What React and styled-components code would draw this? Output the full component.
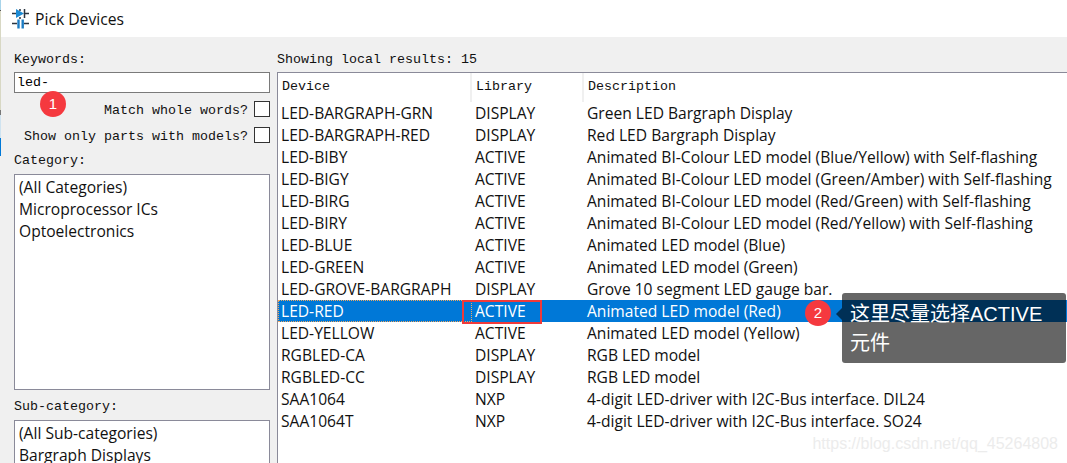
import React from "react";
import styled, { createGlobalStyle } from "styled-components";

const rows = [
  ["LED-BARGRAPH-GRN", "DISPLAY", "Green LED Bargraph Display"],
  ["LED-BARGRAPH-RED", "DISPLAY", "Red LED Bargraph Display"],
  ["LED-BIBY", "ACTIVE", "Animated BI-Colour LED model (Blue/Yellow) with Self-flashing"],
  ["LED-BIGY", "ACTIVE", "Animated BI-Colour LED model (Green/Amber) with Self-flashing"],
  ["LED-BIRG", "ACTIVE", "Animated BI-Colour LED model (Red/Green) with Self-flashing"],
  ["LED-BIRY", "ACTIVE", "Animated BI-Colour LED model (Red/Yellow) with Self-flashing"],
  ["LED-BLUE", "ACTIVE", "Animated LED model (Blue)"],
  ["LED-GREEN", "ACTIVE", "Animated LED model (Green)"],
  ["LED-GROVE-BARGRAPH", "DISPLAY", "Grove 10 segment LED gauge bar."],
  ["LED-RED", "ACTIVE", "Animated LED model (Red)"],
  ["LED-YELLOW", "ACTIVE", "Animated LED model (Yellow)"],
  ["RGBLED-CA", "DISPLAY", "RGB LED model"],
  ["RGBLED-CC", "DISPLAY", "RGB LED model"],
  ["SAA1064", "NXP", "4-digit LED-driver with I2C-Bus interface. DIL24"],
  ["SAA1064T", "NXP", "4-digit LED-driver with I2C-Bus interface. SO24"],
];

const GlobalStyle = createGlobalStyle`
  html, body { margin: 0; padding: 0; background: #f0f0f0; overflow: hidden; }
`;

const Page = styled.div`
  position: relative;
  width: 1067px;
  height: 463px;
  overflow: hidden;
  background: #f0f0f0;
  color: #000;
  font-family: "Open Sans", "Noto Sans", sans-serif;
`;

// sliver of the window behind the dialog, left in the screenshot
const EdgeSliver = styled.div`
  position: absolute;
  left: 0;
  top: 0;
  width: 1px;
  height: 156px;
  background: linear-gradient(
    to bottom,
    #a8d4ea 0,
    #a8d4ea 10px,
    #555 10px,
    #555 11px,
    #d8d8c4 11px,
    #d8d8c4 110px,
    #777 110px,
    #777 115px,
    #cfe3f0 115px,
    #cfe3f0 138px,
    #0078d7 138px
  );
`;

const TitleBar = styled.div`
  display: flex;
  align-items: center;
  gap: 6px;
  height: 37px;
  padding-left: 12px;
  background: #fff;
  font-size: 15.7px;
  color: #111;
`;

const Body = styled.div`
  display: flex;
  height: 426px;
`;

const Side = styled.div`
  display: flex;
  flex-direction: column;
  width: 256px;
  margin-left: 14px;
  padding-top: 15px;
`;

const Mono = styled.div`
  margin-top: ${({ $top }) => $top || 0}px;
  font-family: "Liberation Mono", monospace;
  font-size: 13.33px;
  line-height: 16px;
  color: #111;
`;

const Input = styled.div`
  height: 19px;
  margin-top: 4px;
  padding-left: 2px;
  border: 1px solid #7a7a7a;
  background: #fff;
  font-family: "Liberation Mono", monospace;
  font-size: 13.33px;
  line-height: 19px;
`;

const CheckRow = styled.div`
  display: flex;
  justify-content: flex-end;
  align-items: flex-start;
  gap: 6px;
  height: 16px;
  margin-top: ${({ $top }) => $top}px;
`;

const CheckLabel = styled(Mono)`
  padding-top: 2px;
`;

const Box = styled.div`
  width: 14px;
  height: 14px;
  border: 1px solid #333;
  background: #fff;
`;

const ListBox = styled.div`
  flex: none;
  box-sizing: border-box;
  height: ${({ $height }) => $height}px;
  margin-top: ${({ $top }) => $top}px;
  padding: 1px 4px;
  border: 1px solid #8a8a99;
  background: #fff;
  font-size: 15.6px;
  line-height: 22px;
  color: #111;
`;

const Results = styled.div`
  display: flex;
  flex-direction: column;
  flex: 1;
  margin-left: 7px;
  padding-top: 15px;
`;

const Table = styled.div`
  flex: none;
  height: 400px;
  margin-top: 4px;
  border: 1px solid #8a8a99;
  border-right: none;
  background: #fff;
`;

const Header = styled.div`
  display: grid;
  grid-template-columns: 194px 112px 1fr;
  height: 29px;
`;

const HeadCell = styled.div`
  padding: 5px 0 0 4px;
  border-right: 2px solid #f0f0f0;
  font-family: "Liberation Mono", monospace;
  font-size: 13.33px;
  line-height: 18px;
  color: #111;
  &:last-child { border-right: none; }
`;

const Row = styled.div`
  display: grid;
  grid-template-columns: 194px 112px 1fr;
  height: 22px;
  background: ${({ $selected }) => ($selected ? "#0078d7" : "transparent")};
  color: ${({ $selected }) => ($selected ? "#fff" : "#111")};
  font-size: 15.6px;
  line-height: 22px;
  white-space: nowrap;
`;

const Cell = styled.div`
  padding-left: 3px;
`;

const FocusCell = styled(Cell)`
  box-sizing: border-box;
  padding-left: 2px;
  border: 1px dotted ${({ $focus }) => ($focus ? "#f0a860" : "transparent")};
  line-height: 20px;
`;

const Badge = styled.div`
  position: absolute;
  left: ${({ $x }) => $x}px;
  top: ${({ $y }) => $y}px;
  width: 26px;
  height: 26px;
  border-radius: 50%;
  background: #f5393f;
  color: #fff;
  font-family: "Liberation Sans", sans-serif;
  font-size: 15px;
  line-height: 26px;
  text-align: center;
`;

const RedBox = styled.div`
  position: absolute;
  left: 462px;
  top: 300px;
  width: 76px;
  height: 20px;
  border: 2px solid #f03a3a;
`;

const Tip = styled.div`
  position: absolute;
  left: 842px;
  top: 293px;
  box-sizing: border-box;
  width: 224px;
  height: 70px;
  padding: 7px 8px;
  border-radius: 3px;
  background: rgba(0, 0, 0, 0.6);
  color: #fff;
  font-family: "Liberation Sans", "Noto Sans CJK SC", sans-serif;
  font-size: 20px;
  line-height: 29px;
  &::before {
    content: "";
    position: absolute;
    left: -6px;
    top: 15px;
    border: 6px solid transparent;
    border-left: none;
    border-right-color: rgba(0, 0, 0, 0.6);
  }
`;

const TipLine = styled.div`
  white-space: nowrap;
`;

const Watermark = styled.div`
  position: absolute;
  right: 9px;
  top: 435px;
  font-family: "Liberation Sans", sans-serif;
  font-size: 16px;
  color: #ececec;
`;

const TitleIcon = () => (
  <svg width="17" height="20" viewBox="0 0 17 20">
    <path d="M0 4.5h4M12 4.5h5M0 14.5h5M12 14.5h5" stroke="#2b3440" strokeWidth="1.6" />
    <path d="M4 0v9l8-4.5z" fill="#1b8ad4" />
    <path d="M12.5 0v9M8 0v2M8 8v2" stroke="#2b3440" strokeWidth="1.5" />
    <path d="M6.5 10.5v9M10.7 10.5v9" stroke="#1b7cc4" strokeWidth="2.4" />
  </svg>
);

export default function App() {
  return (
    <Page>
      <GlobalStyle />
      <TitleBar>
        <TitleIcon />
        Pick Devices
      </TitleBar>
      <Body>
        <Side>
          <Mono>Keywords:</Mono>
          <Input>led-</Input>
          <CheckRow $top={8}>
            <CheckLabel>Match whole words?</CheckLabel>
            <Box />
          </CheckRow>
          <CheckRow $top={10}>
            <CheckLabel>Show only parts with models?</CheckLabel>
            <Box />
          </CheckRow>
          <Mono $top={10}>Category:</Mono>
          <ListBox $height={216} $top={5}>
            <div>(All Categories)</div>
            <div>Microprocessor ICs</div>
            <div>Optoelectronics</div>
          </ListBox>
          <Mono $top={9}>Sub-category:</Mono>
          <ListBox $height={60} $top={5}>
            <div>(All Sub-categories)</div>
            <div>Bargraph Displays</div>
          </ListBox>
        </Side>
        <Results>
          <Mono>Showing local results: 15</Mono>
          <Table>
            <Header>
              <HeadCell>Device</HeadCell>
              <HeadCell>Library</HeadCell>
              <HeadCell>Description</HeadCell>
            </Header>
            {rows.map(([device, library, description]) => (
              <Row key={device} $selected={device === "LED-RED"}>
                <FocusCell $focus={device === "LED-RED"}>{device}</FocusCell>
                <Cell>{library}</Cell>
                <Cell>{description}</Cell>
              </Row>
            ))}
          </Table>
        </Results>
      </Body>
      <EdgeSliver />
      <Badge $x={40} $y={91}>1</Badge>
      <Badge $x={805} $y={300}>2</Badge>
      <RedBox />
      <Tip>
        <TipLine>这里尽量选择ACTIVE</TipLine>
        <TipLine>元件</TipLine>
      </Tip>
      <Watermark>https://blog.csdn.net/qq_45264808</Watermark>
    </Page>
  );
}
